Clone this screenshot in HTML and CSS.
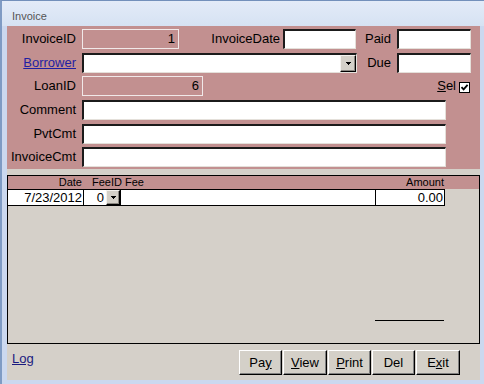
FILE: index.html
```html
<!DOCTYPE html>
<html>
<head>
<meta charset="utf-8">
<link rel="stylesheet" href="styles.css">
</head>
<body>
<div class="window">
  <div class="titlebar">Invoice</div>
  <div class="client">
    <div class="content">
      <div class="header">
        <div class="row first">
          <span class="lbl">InvoiceID</span>
          <div class="fld locked w97">1</div>
          <span class="lbl2 w104">InvoiceDate</span>
          <div class="fld edit w73"></div>
          <span class="lbl2 w41">Paid</span>
          <div class="fld edit w74"></div>
        </div>
        <div class="row mt4">
          <a class="lbl link">Borrower</a>
          <div class="fld edit combo w275"><span class="ddbtn"><svg width="5" height="3" viewBox="0 0 5 3"><rect x="0" y="0" width="5" height="1"/><rect x="1" y="1" width="3" height="1"/><rect x="2" y="2" width="1" height="1"/></svg></span></div>
          <span class="lbl2 w40">Due</span>
          <div class="fld edit w74"></div>
        </div>
        <div class="row mt3">
          <span class="lbl">LoanID</span>
          <div class="fld locked w121">6</div>
          <div class="sel"><span><span class="u">S</span>el</span><svg class="chk" width="11" height="11" viewBox="0 0 11 11"><rect x="0.5" y="0.5" width="10" height="10" fill="#fff" stroke="#000"/><path d="M2.5 5.2 L4.6 7.4 L8.6 2.8" fill="none" stroke="#000" stroke-width="1.8"/></svg></div>
        </div>
        <div class="row mt4">
          <span class="lbl">Comment</span>
          <div class="fld edit w364"></div>
        </div>
        <div class="row mt4">
          <span class="lbl">PvtCmt</span>
          <div class="fld edit w364"></div>
        </div>
        <div class="row mt3">
          <span class="lbl">InvoiceCmt</span>
          <div class="fld edit w364"></div>
        </div>
      </div>
      <div class="subform">
        <div class="sub-head">
          <span class="h-date">Date</span>
          <span class="h-feeid">FeeID</span>
          <span class="h-fee">Fee</span>
          <span class="h-amt">Amount</span>
        </div>
        <div class="sub-row">
          <div class="cell c-date">7/23/2012</div>
          <div class="cell c-feeid"><span class="fv">0</span><span class="ddbtn small"><svg width="5" height="3" viewBox="0 0 5 3"><rect x="0" y="0" width="5" height="1"/><rect x="1" y="1" width="3" height="1"/><rect x="2" y="2" width="1" height="1"/></svg></span></div>
          <div class="cell c-fee"></div>
          <div class="cell c-amt">0.00</div>
        </div>
        <div class="sub-rest">
          <div class="total-line"></div>
        </div>
      </div>
      <div class="footer">
        <a class="log">Log</a>
        <div class="btns">
          <div class="btn w43">Pa<span class="u">y</span></div>
          <div class="btn w44"><span class="u">V</span>iew</div>
          <div class="btn w43"><span class="u">P</span>rint</div>
          <div class="btn w43">Del</div>
          <div class="btn w44">E<span class="u">x</span>it</div>
        </div>
      </div>
    </div>
  </div>
</div>
</body>
</html>
```

FILE: styles.css
```css
* { box-sizing: border-box; }
html, body { margin: 0; padding: 0; }
body {
  width: 484px; height: 384px; overflow: hidden;
  font-family: "Liberation Sans", Arial, sans-serif;
  font-size: 13px; color: #000;
  background: #cad8ef;
}
.window {
  width: 484px; height: 384px;
  display: flex; flex-direction: column;
  border-left: 2px solid #7f9bc4;
  border-top: 1px solid #7390bb;
  background: #cbd8ef;
}
.titlebar {
  height: 25px; flex: none;
  padding: 8px 0 0 10px;
  line-height: 14px; font-size: 11px;
  color: #555;
  background: linear-gradient(#e3ebf8, #d6e2f3);
}
.client {
  flex: 1; display: flex; flex-direction: column;
  padding: 0 4px 4px 5px;
}
.content {
  flex: 1; display: flex; flex-direction: column;
  background: #d5d0c9;
}
.header {
  height: 143px; flex: none;
  background: #c29090;
  padding-top: 3px;
}
.row { display: flex; align-items: center; height: 20px; }
.mt4 { margin-top: 4px; }
.mt3 { margin-top: 3px; }
.lbl {
  width: 75px; flex: none; text-align: right; padding-right: 6px;
  line-height: 20px; white-space: nowrap;
}
.lbl2 { flex: none; text-align: right; padding-right: 6px; line-height: 20px; white-space: nowrap; }
.w104 { width: 104px; padding-right: 3px; }
.w41 { width: 41px; }
.w40 { width: 40px; }
.link { color: #1f1fa3; text-decoration: underline; }
.fld { height: 20px; flex: none; }
.w97 { width: 97px; }
.w73 { width: 73px; }
.w74 { width: 74px; }
.w121 { width: 121px; }
.w275 { width: 275px; }
.w364 { width: 364px; }
.locked {
  border: 1px solid #f1e9e9;
  text-align: right; padding-right: 3px; line-height: 18px;
}
.edit {
  background: #fff;
  border-top: 2px solid #1b1b1b; border-left: 2px solid #1b1b1b;
  border-right: 1px solid #e4e0da; border-bottom: 1px solid #e4e0da;
}
.combo { display: flex; justify-content: flex-end; }
.ddbtn {
  width: 16px; height: 17px; flex: none;
  display: flex; align-items: center; justify-content: center;
  background: #d4d0c8;
  border-top: 1px solid #f4f2ee; border-left: 1px solid #f4f2ee;
  border-right: 1px solid #000; border-bottom: 1px solid #000;
  box-shadow: inset -1px -1px #8a8680;
}
.ddbtn svg { display: block; fill: #000; }
.sel { margin-left: auto; margin-right: 10px; display: flex; align-items: center; gap: 3px; line-height: 20px; }
.chk { display: block; margin-top: 2px; }
.u { text-decoration: underline; }
.subform {
  margin-top: 6px; height: 169px; flex: none;
  border: 1px solid #000;
  display: flex; flex-direction: column;
}
.sub-head {
  height: 13px; flex: none; display: flex;
  background: #c29090;
  font-size: 11px; line-height: 13px; white-space: nowrap;
}
.h-date { width: 76px; text-align: right; padding-right: 2px; }
.h-feeid { margin-left: 8px; }
.h-fee { margin-left: 3px; }
.h-amt { margin-left: auto; margin-right: 35px; }
.sub-row {
  width: 437px; height: 17px; flex: none; display: flex;
  border-top: 1px solid #000; border-bottom: 1px solid #000;
  background: #fff;
}
.cell { border-right: 1px solid #000; padding-top: 1px; line-height: 14px; white-space: nowrap; }
.c-date { width: 76px; text-align: right; padding-right: 1px; }
.c-feeid { width: 37px; display: flex; padding-top: 0; }
.fv { flex: 1; text-align: right; padding-right: 2px; padding-top: 1px; }
.ddbtn.small { width: 14px; height: 15px; }
.c-fee { width: 255px; }
.c-amt { width: 69px; text-align: right; padding-right: 1px; }
.sub-rest { flex: 1; padding-top: 114px; }
.total-line { margin-left: 367px; width: 69px; height: 1px; background: #000; }
.footer { flex: 1; display: flex; align-items: flex-start; padding-top: 6px; }
.log { margin-left: 5px; color: #1a1a80; text-decoration: underline; line-height: 18px; }
.btns { margin-left: auto; margin-right: 20px; display: flex; gap: 1px; }
.btn {
  height: 25px; flex: none;
  background: #d4d0c8;
  border: 1px solid; border-color: #fff #000 #000 #fff;
  box-shadow: inset -1px -1px #808080;
  text-align: center; line-height: 23px;
}
.w43 { width: 43px; }
.w44 { width: 44px; }
```
